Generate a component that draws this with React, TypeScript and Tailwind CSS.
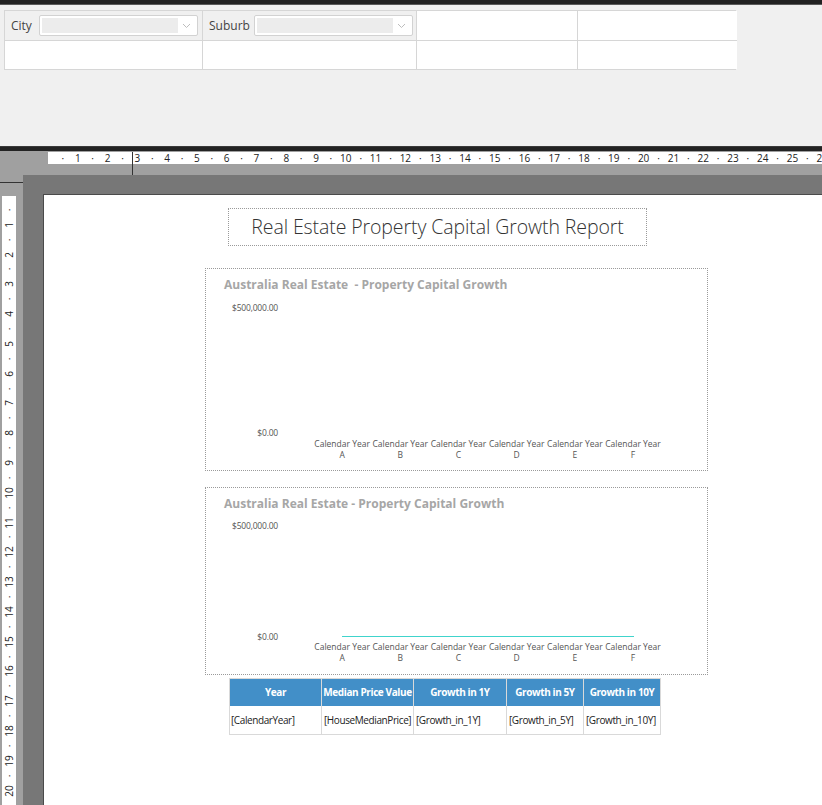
import React from 'react';

function Chevron() {
  return (
    <svg width="9" height="6" viewBox="0 0 9 6" fill="none">
      <path d="M1 1l3.5 3.5L8 1" stroke="#bdbdbd" strokeWidth="1" />
    </svg>
  );
}

function Combo() {
  return (
    <div className="flex h-[21px] w-[159px] rounded-[2px] border border-[#d2d2d2] bg-white p-[2px]">
      <div className="flex-1 bg-[#ececec]" />
      <div className="grid w-[17px] place-items-center">
        <Chevron />
      </div>
    </div>
  );
}

function ParamPanel() {
  return (
    <div className="h-[141px] bg-[#f0f0f0] px-[4px] pt-[5px]">
      <div className="grid w-[732px] grid-cols-[198px_214px_161px_159px] border border-[#d6d6d6] text-[12px] text-[#444]">
        <div className="flex h-[30px] items-center border-r border-b border-[#d6d6d6] bg-[#f0f0f0]">
          <span className="w-[34px] pl-[6px]">City</span>
          <Combo />
        </div>
        <div className="flex h-[30px] items-center border-r border-b border-[#d6d6d6] bg-[#f0f0f0]">
          <span className="w-[51px] pl-[6px]">Suburb</span>
          <Combo />
        </div>
        <div className="h-[30px] border-r border-b border-[#d6d6d6] bg-white" />
        <div className="h-[30px] border-b border-[#d6d6d6] bg-white" />
        <div className="h-[28px] border-r border-[#d6d6d6] bg-white" />
        <div className="h-[28px] border-r border-[#d6d6d6] bg-white" />
        <div className="h-[28px] border-r border-[#d6d6d6] bg-white" />
        <div className="h-[28px] bg-white" />
      </div>
    </div>
  );
}

function HRuler() {
  const marks: string[] = [];
  for (let n = 1; n <= 26; n++) {
    marks.push('·');
    marks.push(String(n));
  }
  return (
    <div className="flex flex-1 items-center overflow-hidden bg-white pl-[7.45px] text-[10px] leading-[12px] text-[#222]">
      {marks.map((m, i) => (
        <span key={i} className="w-[14.9px] shrink-0 text-center">
          {m}
        </span>
      ))}
    </div>
  );
}

function VRuler() {
  const marks: string[] = [];
  for (let n = 1; n <= 20; n++) {
    marks.push('·');
    marks.push(String(n));
  }
  return (
    <div className="ml-[2px] mt-[13px] flex w-[14px] flex-1 flex-col items-center overflow-hidden bg-white pt-[6.45px] text-[10px] leading-[12px] text-[#222]">
      {marks.map((m, i) => (
        <span key={i} className="flex h-[14.9px] w-[14px] shrink-0 items-center justify-center">
          <span className="-rotate-90 whitespace-nowrap">{m}</span>
        </span>
      ))}
    </div>
  );
}

const years = ['A', 'B', 'C', 'D', 'E', 'F'];

function Chart({
  title,
  height,
  gap,
  axisH,
  labelShift,
  line,
}: {
  title: string;
  height: string;
  gap: string;
  axisH: string;
  labelShift: string;
  line?: boolean;
}) {
  return (
    <div className={`ml-[161px] w-[503px] border border-dotted border-[#9a9a9a] ${height}`}>
      <div className="h-[26px] whitespace-pre pl-[18px] pt-[6px] text-[12px] leading-[20px] font-bold text-[#a6a6a6]">
        {title}
      </div>
      <div className={`flex ${gap}`}>
        <div className={`flex w-[72px] flex-col items-end justify-between text-[8.5px] leading-[10px] tracking-[-0.2px] text-[#555] ${axisH}`}>
          <span>$500,000.00</span>
          <span>$0.00</span>
        </div>
        <div className="relative flex-1">
          {line && <div className="absolute bottom-[5px] left-[64px] h-px w-[292px] bg-[#40d4cc]" />}
        </div>
      </div>
      <div className={`flex pl-[107px] ${labelShift}`}>
        {years.map((y) => (
          <div key={y} className="w-[58.2px] text-center text-[8.5px] leading-[11px] whitespace-nowrap text-[#555]">
            <div>Calendar Year</div>
            <div>{y}</div>
          </div>
        ))}
      </div>
    </div>
  );
}

function DataTable() {
  const cols = [
    ['Year', '[CalendarYear]', 'w-[92px]', 'pl-[1px]'],
    ['Median Price Value', '[HouseMedianPrice]', 'w-[92px]', 'pl-[2px]'],
    ['Growth in 1Y', '[Growth_in_1Y]', 'w-[93px]', 'pl-[2px]'],
    ['Growth in 5Y', '[Growth_in_5Y]', 'w-[77px]', 'pl-[2px]'],
    ['Growth in 10Y', '[Growth_in_10Y]', 'w-[76px]', 'pl-[2px]'],
  ];
  return (
    <div className="ml-[185px] mt-[3px] flex w-fit border border-[#d9d9d9]">
      {cols.map(([h, d, w, p], i) => (
        <div key={h} className={`${w} ${i < cols.length - 1 ? 'border-r border-[#d9d9d9]' : ''}`}>
          <div className="flex h-[27px] items-center justify-center whitespace-nowrap bg-[#428fc8] text-[10px] font-bold tracking-[-0.4px] text-white">
            {h}
          </div>
          <div className={`flex h-[28px] items-center whitespace-nowrap text-[10px] tracking-[-0.4px] text-[#222] ${p}`}>
            {d}
          </div>
        </div>
      ))}
    </div>
  );
}

export default function App() {
  return (
    <div className="flex h-[805px] w-[822px] flex-col overflow-hidden bg-[#f0f0f0] font-['Open_Sans',sans-serif]">
      <div className="h-[5px] border-b border-[#5a5a5a] bg-[#222]" />
      <ParamPanel />
      <div className="h-[5px] border-t border-[#3a3a3a] bg-[#232323]" />
      <div className="relative flex flex-1 flex-col bg-[#a0a0a0]">
        <div className="absolute left-[132px] top-[1px] h-[23px] w-px bg-[#333]" />
        <div className="mt-px flex h-[12px]">
          <div className="w-[48px]" />
          <HRuler />
        </div>
        <div className="h-[11px]" />
        <div className="flex min-h-0 flex-1">
          <div className="flex w-[23px] flex-col">
            <div className="mt-[7px] h-px w-[23px] bg-[#333]" />
            <VRuler />
          </div>
          <div className="flex flex-1 flex-col bg-[#777] pl-[20px] pt-[19px]">
            <div className="flex flex-1 flex-col border-l border-t border-[#4a4a4a] bg-white">
              <div className="ml-[184px] mt-[13px] flex h-[38px] w-[419px] items-center justify-center border border-dotted border-[#9a9a9a] text-[19.5px] font-light tracking-[-0.1px] text-[#333]">
                Real Estate Property Capital Growth Report
              </div>
              <div className="mt-[22px]">
                <Chart
                  title="Australia Real Estate  - Property Capital Growth"
                  height="h-[203px]"
                  gap="mt-[8px]"
                  axisH="h-[135px]"
                  labelShift="mt-0"
                />
              </div>
              <div className="mt-[16px]">
                <Chart
                  title="Australia Real Estate - Property Capital Growth"
                  height="h-[188px]"
                  gap="mt-[7px]"
                  axisH="h-[121px]"
                  labelShift="-mt-[1.5px]"
                  line
                />
              </div>
              <DataTable />
            </div>
          </div>
        </div>
      </div>
    </div>
  );
}
